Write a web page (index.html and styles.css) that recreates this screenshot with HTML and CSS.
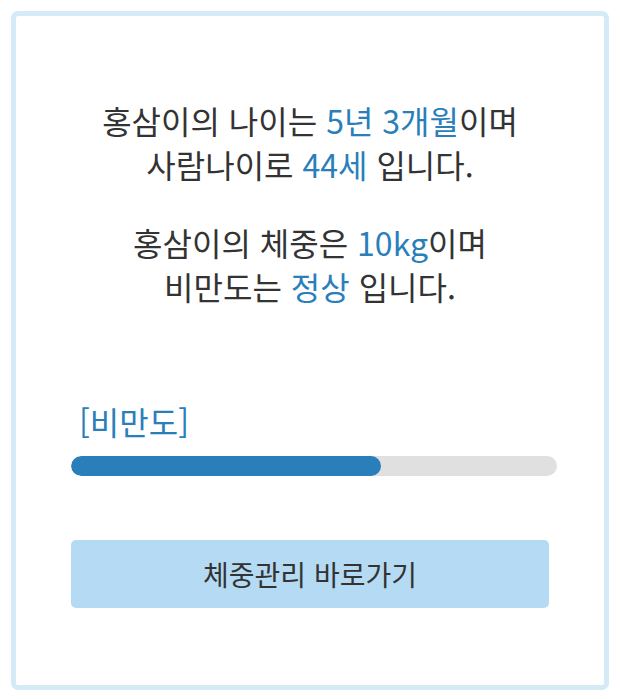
FILE: index.html
```html
<!DOCTYPE html>
<html lang="ko">
<head>
<meta charset="utf-8">
<link rel="stylesheet" href="styles.css">
</head>
<body>
<div class="card">
  <div class="summary">
    <p class="para">홍삼이의 나이는 <span class="hl">5년 3개월</span>이며<br>사람나이로 <span class="hl">44세</span> 입니다.</p>
    <p class="para">홍삼이의 체중은 <span class="hl">10kg</span>이며<br>비만도는 <span class="hl">정상</span> 입니다.</p>
  </div>
  <div class="obesity">
    <div class="label">[비만도]</div>
    <div class="track"><div class="fill" style="width: 63.8%"></div></div>
  </div>
  <button class="btn">체중관리 바로가기</button>
</div>
</body>
</html>
```

FILE: styles.css
```css
html, body {
  margin: 0;
  padding: 0;
  background: #ffffff;
}
body {
  padding: 11px 12px 9px 11px;
  font-family: "Noto Sans CJK KR", "Noto Sans", sans-serif;
  color: #333333;
}
.card {
  box-sizing: border-box;
  height: 679px;
  border: 5px solid #d5e9f7;
  border-radius: 7px;
  padding: 82px 47px 0 55px;
  display: flex;
  flex-direction: column;
}
.summary {
  text-align: center;
  padding-right: 8px;
}
.para {
  margin: 0;
  font-size: 32px;
  line-height: 44px;
}
.para + .para {
  margin-top: 34px;
}
.hl {
  color: #2a7fbb;
}
.obesity {
  margin-top: 93px;
}
.label {
  color: #2a7fbb;
  font-size: 32px;
  line-height: 40px;
  padding-left: 8px;
}
.track {
  margin-top: 15px;
  height: 20px;
  background: #e0e0e0;
  border-radius: 10px;
  overflow: hidden;
}
.fill {
  height: 100%;
  background: #2a7fbb;
  border-radius: 10px;
}
.btn {
  margin-top: 64px;
  margin-right: 8px;
  height: 68px;
  border: none;
  border-radius: 5px;
  background: #b5dbf4;
  color: #333333;
  font-family: "Noto Sans CJK KR", "Noto Sans", sans-serif;
  font-size: 28px;
  padding: 0;
}
```
